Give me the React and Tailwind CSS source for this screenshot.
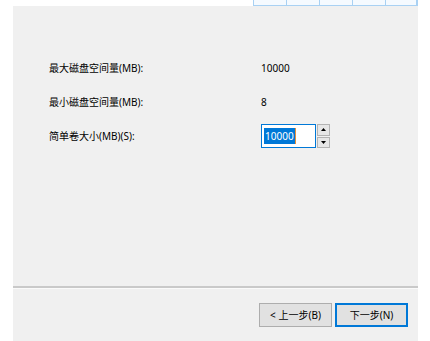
export default function App() {
  const rows = [
    { label: "最大磁盘空间量(MB):", value: "10000" },
    { label: "最小磁盘空间量(MB):", value: "8" },
  ];

  return (
    <div className="w-[430px] h-[341px] bg-white flex flex-col font-['Noto_Sans','Noto_Sans_CJK_SC',sans-serif] text-black overflow-hidden">
      {/* top strip of header cells */}
      <div className="h-[6px] flex pl-[253px]">
        {[0, 1, 2, 3, 4].map((i) => (
          <div
            key={i}
            className={
              "w-[33px] h-[6px] bg-[#f5faff] border-l border-b border-[#a9d1f3]" +
              (i === 4 ? " border-r-2" : "")
            }
          />
        ))}
      </div>

      {/* main panel */}
      <div className="ml-[13px] w-[405px] flex-1 bg-[#f0f0f0] flex flex-col">
        <div className="h-[280px] pt-[45px]">
          {rows.map((r) => (
            <div key={r.label} className="h-[34px] flex items-center text-[10px]">
              <span className="w-[248px] pl-[36px]">{r.label}</span>
              <span>{r.value}</span>
            </div>
          ))}
          <div className="h-[34px] flex items-center text-[10px]">
            <span className="w-[248px] pl-[36px]">简单卷大小(MB)(S):</span>
            <div className="flex items-center">
              <div className="w-[55px] h-[24px] bg-white border border-[#0078d7] flex items-center pl-[2px]">
                <span className="bg-[#0078d7] text-white h-[16px] leading-[16px] px-[1px]">10000</span>
                <span className="w-px h-[16px] bg-[#e8903a]" />
              </div>
              <div className="w-[13px] h-[24px] ml-px flex flex-col gap-px">
                <div className="flex-1 bg-[#e6e6e6] border border-[#b3b3b3] flex items-center justify-center">
                  <svg width="5" height="3" viewBox="0 0 5 3">
                    <path d="M2.5 0 L5 3 L0 3 Z" fill="#000" />
                  </svg>
                </div>
                <div className="flex-1 bg-[#e6e6e6] border border-[#b3b3b3] flex items-center justify-center">
                  <svg width="5" height="3" viewBox="0 0 5 3">
                    <path d="M0 0 L5 0 L2.5 3 Z" fill="#000" />
                  </svg>
                </div>
              </div>
            </div>
          </div>
        </div>

        {/* separator */}
        <div className="h-[2px] bg-[#c9c9c9]" />
        <div className="h-px bg-[#fafafa]" />

        {/* footer buttons */}
        <div className="flex-1 flex justify-end items-start pt-[14px] pr-[10px] gap-[3px] text-[10px]">
          <button className="w-[73px] h-[24px] bg-[#e1e1e1] border border-[#adadad] flex items-center justify-center">
            &lt; 上一步(B)
          </button>
          <button className="w-[73px] h-[24px] bg-[#e1e1e1] border-2 border-[#0078d7] flex items-center justify-center">
            下一步(N)
          </button>
        </div>
      </div>
    </div>
  );
}
